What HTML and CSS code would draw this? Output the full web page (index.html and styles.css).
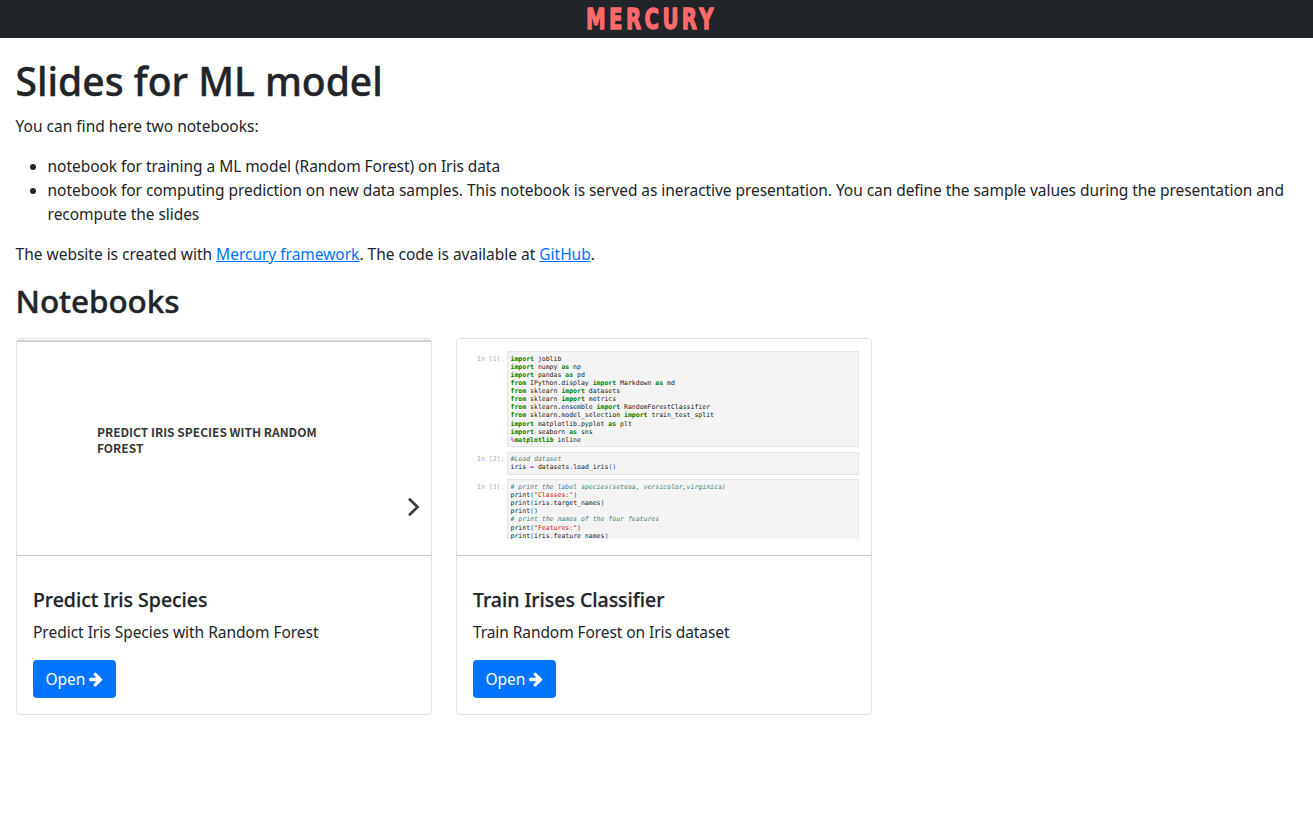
FILE: index.html
```html
<!DOCTYPE html>
<html lang="en">
<head>
<meta charset="utf-8">
<title>Mercury</title>
<link rel="stylesheet" href="styles.css">
</head>
<body>
<header class="navbar">
  <svg class="logo" viewBox="0 0 140 38" role="img" aria-label="Mercury"><text x="1" y="28.7" textLength="131" lengthAdjust="spacingAndGlyphs">MERCURY</text></svg>
</header>
<main class="content">
  <h1 class="title">Slides for ML model</h1>
  <p class="text">You can find here two notebooks:</p>
  <ul class="list">
    <li>notebook for training a ML model (Random Forest) on Iris data</li>
    <li>notebook for computing prediction on new data samples. This notebook is served as ineractive presentation. You can define the sample values during the presentation and recompute the slides</li>
  </ul>
  <p class="text about">The website is created with <a class="link" href="#">Mercury framework</a>. The code is available at <a class="link" href="#">GitHub</a>.</p>
  <h2 class="subtitle">Notebooks</h2>
  <div class="cards">
    <article class="card">
      <div class="preview slide">
        <p class="slide-title">PREDICT IRIS SPECIES WITH RANDOM FOREST</p>
        <svg class="chevron" viewBox="0 0 12 18"><path d="M1.8 1.500 9.600 9 1.800 16.500"/></svg>
      </div>
      <div class="card-body">
        <h5 class="card-title">Predict Iris Species</h5>
        <p class="text snug">Predict Iris Species with Random Forest</p>
        <a class="btn" href="#">Open <svg class="arrow" viewBox="0 0 1792 1792"><path d="M1600 960q0 54-37 91l-651 651q-39 37-91 37-51 0-90-37l-75-75q-38-38-38-91t38-91l293-293h-704q-52 0-84.500-37.500t-32.500-90.500v-128q0-53 32.500-90.500t84.500-37.500h704l-293-294q-38-36-38-90t38-90l75-75q38-38 90-38 53 0 91 38l651 651q37 35 37 90z"/></svg></a>
      </div>
    </article>
    <article class="card">
      <div class="preview notebook">
        <div class="cells">
          <div class="cell"><span class="prompt">In [1]:</span><pre class="code"><b>import</b> joblib
<b>import</b> numpy <b>as</b> np
<b>import</b> pandas <b>as</b> pd
<b>from</b> IPython.display <b>import</b> Markdown <b>as</b> md
<b>from</b> sklearn <b>import</b> datasets
<b>from</b> sklearn <b>import</b> metrics
<b>from</b> sklearn.ensemble <b>import</b> RandomForestClassifier
<b>from</b> sklearn.model_selection <b>import</b> train_test_split
<b>import</b> matplotlib.pyplot <b>as</b> plt
<b>import</b> seaborn <b>as</b> sns
<span class="op">%</span><b>matplotlib</b> inline</pre></div>
          <div class="cell"><span class="prompt">In [2]:</span><pre class="code"><i>#Load dataset</i>
iris <span class="op">=</span> datasets<span class="op">.</span>load_iris<span class="par">()</span></pre></div>
          <div class="cell"><span class="prompt">In [3]:</span><pre class="code"><i># print the label species(setosa, versicolor,virginica)</i>
print<span class="par">(</span><span class="str">"Classes:"</span><span class="par">)</span>
print<span class="par">(</span>iris<span class="op">.</span>target_names<span class="par">)</span>
print<span class="par">()</span>
<i># print the names of the four features</i>
print<span class="par">(</span><span class="str">"Features:"</span><span class="par">)</span>
print<span class="par">(</span>iris<span class="op">.</span>feature_names<span class="par">)</span></pre></div>
        </div>
      </div>
      <div class="card-body">
        <h5 class="card-title">Train Irises Classifier</h5>
        <p class="text tight">Train Random Forest on Iris dataset</p>
        <a class="btn" href="#">Open <svg class="arrow" viewBox="0 0 1792 1792"><path d="M1600 960q0 54-37 91l-651 651q-39 37-91 37-51 0-90-37l-75-75q-38-38-38-91t38-91l293-293h-704q-52 0-84.500-37.500t-32.500-90.500v-128q0-53 32.500-90.500t84.500-37.500h704l-293-294q-38-36-38-90t38-90l75-75q38-38 90-38 53 0 91 38l651 651q37 35 37 90z"/></svg></a>
      </div>
    </article>
  </div>
</main>
</body>
</html>
```
FILE: styles.css
```css
* { box-sizing: border-box; }
body { margin: 0; font: 15.5px/24px "Noto Sans", sans-serif; color: #212529; background: #fff; }
.navbar { height: 38px; padding-right: 4px; background: #212529; display: flex; justify-content: center; }
.logo { width: 140px; height: 38px; }
.logo text {
  font: bold 29px "DejaVu Sans", sans-serif;
  letter-spacing: 5px;
  fill: #ff6b6b;
  stroke: #ff6b6b;
  stroke-width: 1.3;
  stroke-linejoin: round;
}
.content { padding: 19px 16px 0 15.6px; }
.title { margin: 0 0 9px; font-size: 39px; line-height: 48px; font-weight: 500; -webkit-text-stroke: 0.4px #212529; }
.text { margin: 0 0 16px; }
.about { letter-spacing: -0.015px; }
.snug { letter-spacing: -0.02px; }
.tight { letter-spacing: -0.08px; }
.list { margin: 0 0 16px; padding-left: 32px; letter-spacing: -0.055px; }
.link { color: #0074ff; text-decoration: underline; }
.subtitle { margin: 0 0 18px; font-size: 31.5px; line-height: 38px; font-weight: 500; letter-spacing: -0.1px; -webkit-text-stroke: 0.4px #212529; }
.cards { display: flex; gap: 24px; margin-left: 0.4px; }
.card { width: 416px; height: 377px; border: 1px solid #dfdfdf; border-radius: 4px; overflow: hidden; background: #fff; }
.preview { height: 217px; border-bottom: 1px solid #c6c6c6; }
.slide {
  display: grid;
  grid-template-columns: 240px 12px;
  justify-content: space-between;
  height: 216px;
  margin-top: 1px;
  padding: 82px 11px 0 80px;
  border-top: 2px solid #d0d0d0;
}
.slide-title { margin: 0; font: bold 12px/16px "Noto Sans CJK SC", sans-serif; color: #383838; }
.chevron { width: 12px; height: 18px; margin-top: 74px; fill: none; stroke: #3a3a3a; stroke-width: 2.6; stroke-linecap: round; }
.notebook { padding: 12px 12px 0 20px; }
.cells { height: 188px; overflow: hidden; display: flex; flex-direction: column; gap: 4.4px; font: 6.5px/8.12px "DejaVu Sans Mono", monospace; }
.cell { display: grid; grid-template-columns: 30px 1fr; flex: none; }
.prompt { padding-top: 3.5px; color: #aaa; }
.code { margin: 0; padding: 2.5px; border: 1px solid #e6e6e6; background: #f4f4f4; font: inherit; color: #222; }
.code b { color: #008000; }
.code i { color: #408080; }
.op { color: #aa22ff; }
.par { color: #0055aa; }
.str { color: #ba2121; }
.card-body { padding: 32px 16px 16px; }
.card-title { margin: 0 0 8px; font-size: 19.5px; line-height: 24px; font-weight: 500; letter-spacing: -0.02px; -webkit-text-stroke: 0.25px #212529; }
.btn { display: inline-flex; align-items: center; gap: 2.500px; height: 38px; padding: 0 12px 0 12.500px; border-radius: 4px; background: #0074ff; color: #fff; text-decoration: none; }
.arrow { width: 16px; height: 16px; fill: #fff; }
```
